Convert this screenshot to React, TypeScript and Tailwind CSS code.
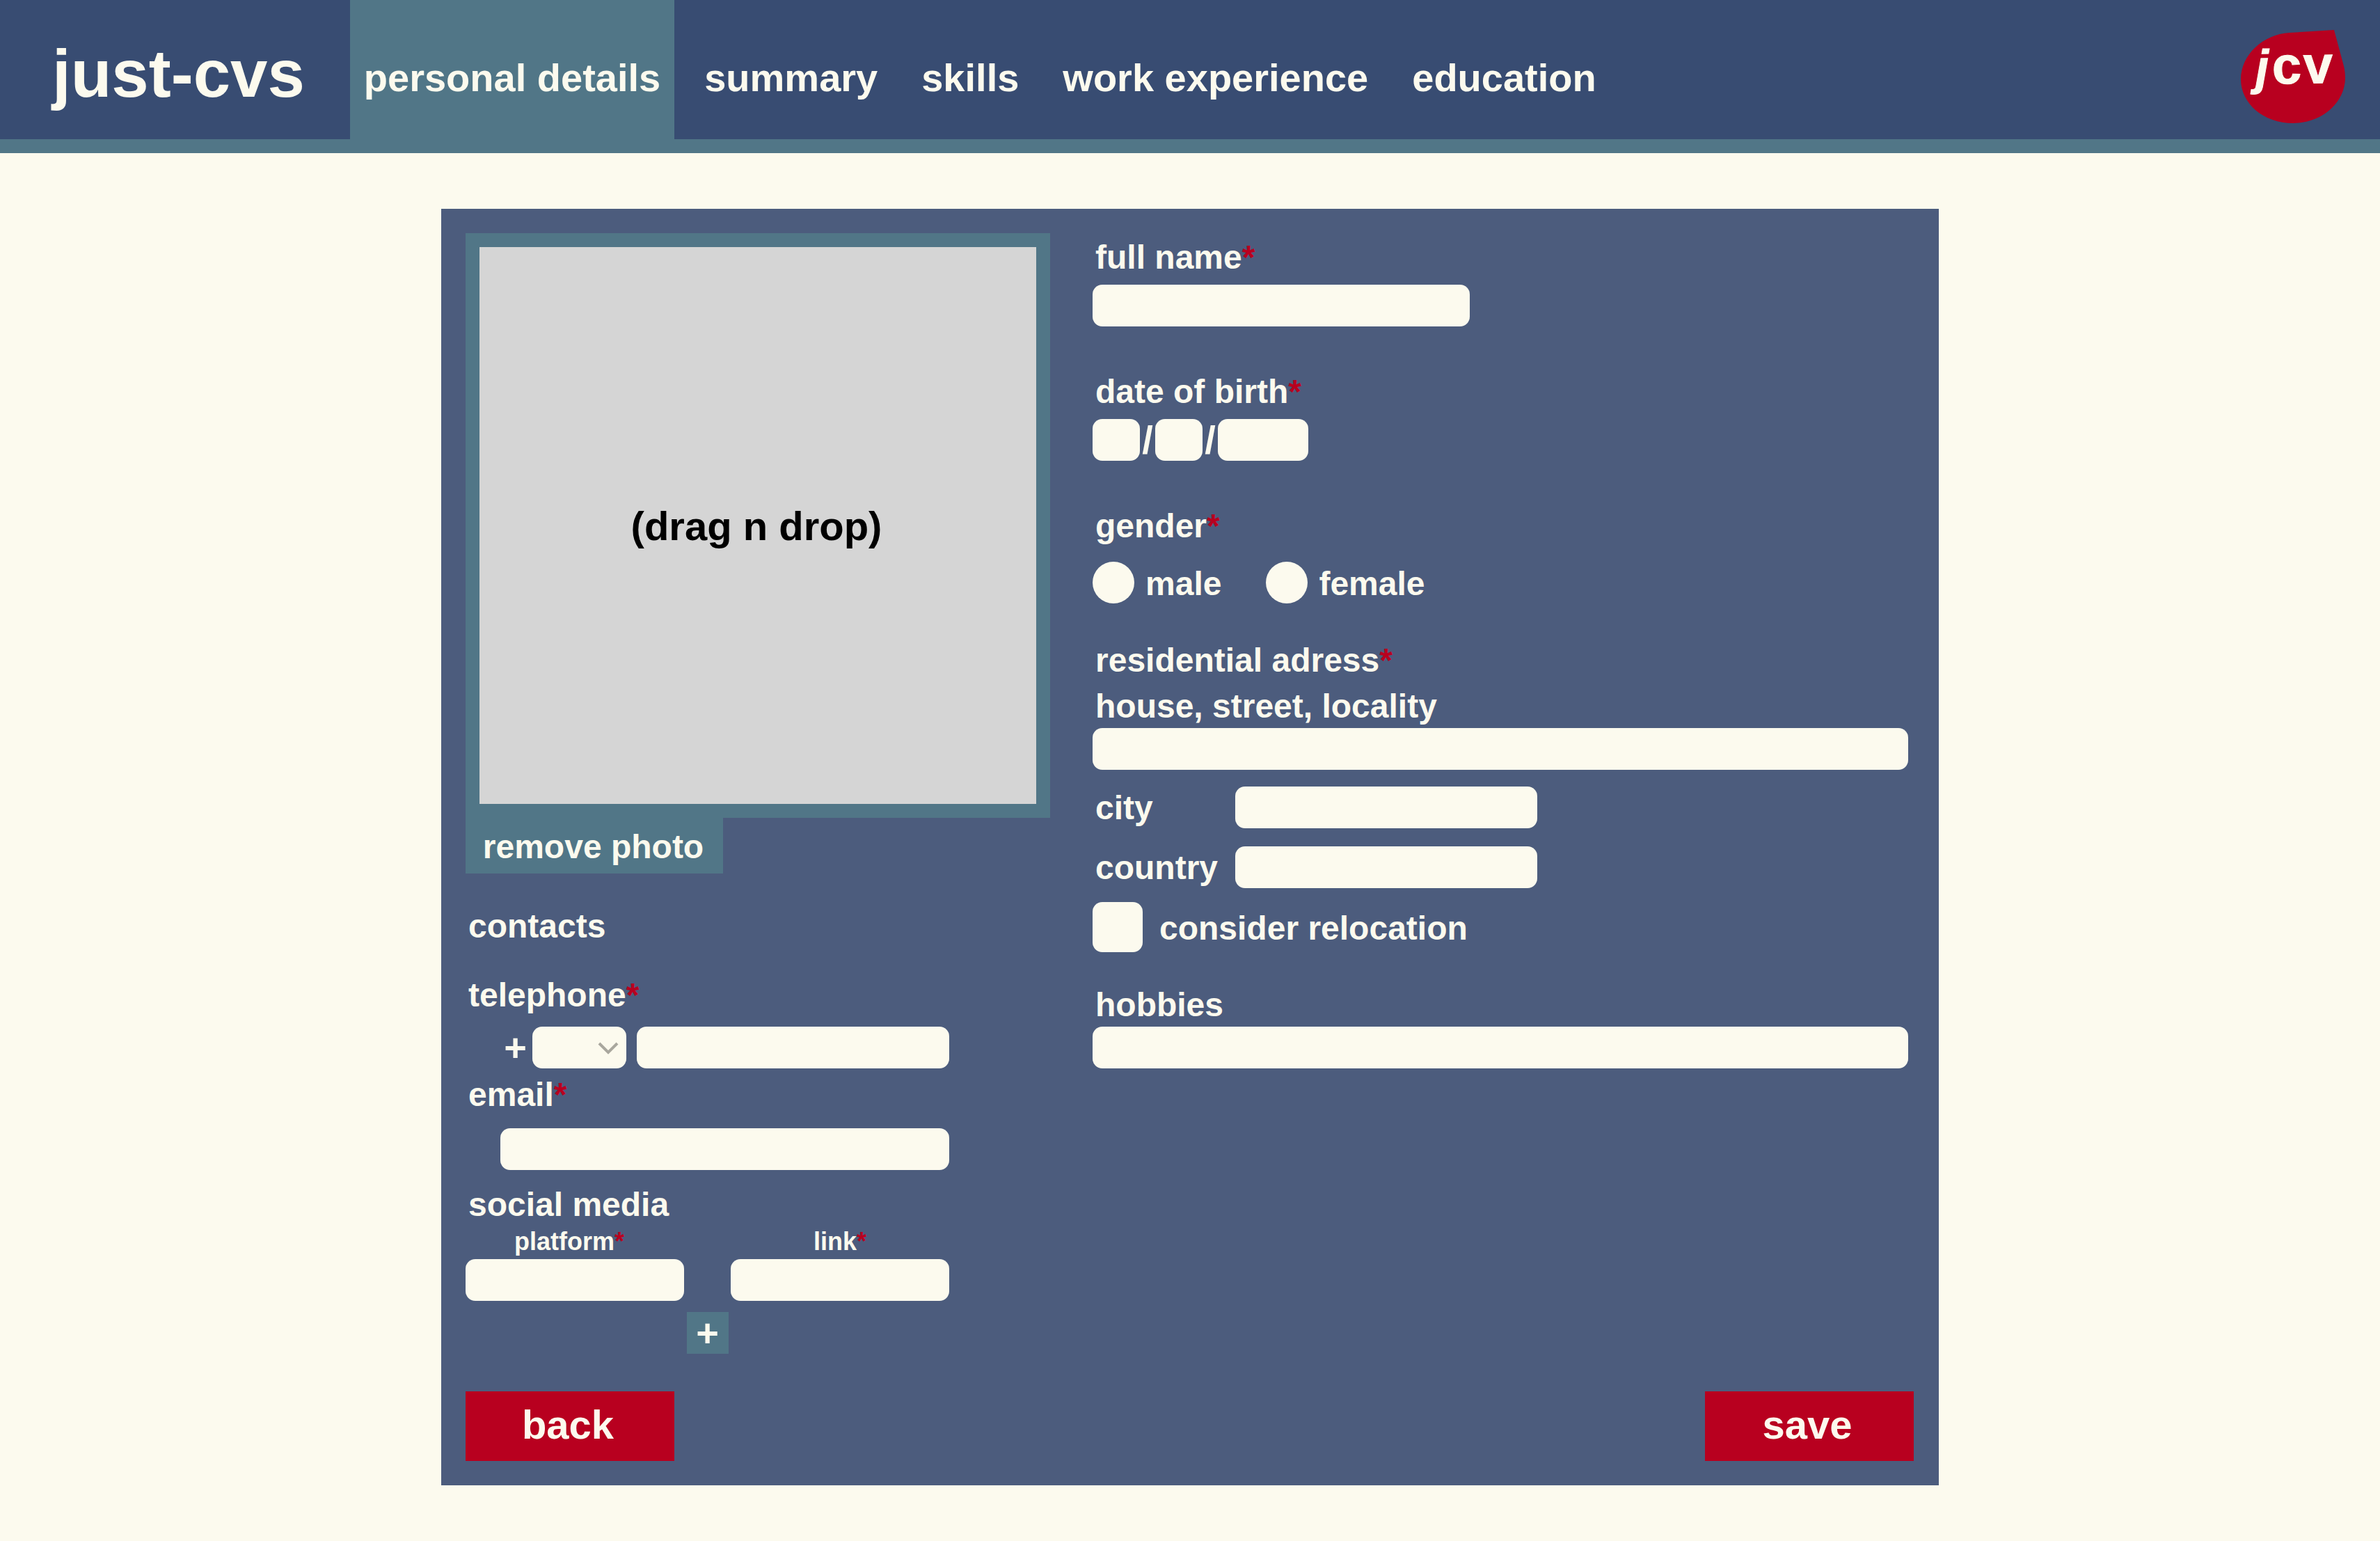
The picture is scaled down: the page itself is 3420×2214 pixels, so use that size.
import type { ReactNode } from "react";

const navItems = [
  { label: "personal details", href: "#personal-details", active: true },
  { label: "summary", href: "#summary", active: false },
  { label: "skills", href: "#skills", active: false },
  { label: "work experience", href: "#work-experience", active: false },
  { label: "education", href: "#education", active: false },
];

const field = "h-[60px] rounded-[14px] bg-[#fcfaee] px-4 text-[36px] text-[#384c72] outline-none";
const label = "block h-[60px] pt-px pl-1 text-[48px] leading-[60px]";

function Star() {
  return <span className="text-[#b8001f]">*</span>;
}

function Label({ id, required, children }: { id?: string; required?: boolean; children: ReactNode }) {
  return (
    <label htmlFor={id} className={label}>
      {children}
      {required && <Star />}
    </label>
  );
}

function Logo() {
  return (
    <svg width="150" height="134" viewBox="0 0 150 134" role="img" aria-label="jcv">
      <path
        d="M134 0 L148 52 C149.500 58 150 64 150 70 C149 106 115 134 75 134 C33 134 0 106 0 71 C0 36 32 6 70 4 Z"
        fill="#b8001f"
      />
      <g
        transform="rotate(-1 75 67)"
        fill="#fcfaee"
        stroke="#fcfaee"
        strokeWidth="1"
        fontFamily="'Liberation Sans', Arial, sans-serif"
        fontWeight="700"
        fontSize="76"
      >
        <text y="77">
          <tspan x="21" fontStyle="italic" fontSize="70">j</tspan>
          <tspan x="45">c</tspan>
          <tspan x="90">v</tspan>
        </text>
      </g>
    </svg>
  );
}

function Header() {
  return (
    <header className="flex items-stretch border-b-[20px] border-[#517687] bg-[#384c72] pr-[50px] pl-[75px]">
      <a href="#home" className="flex h-[200px] items-center pt-[12px] pr-[65px] text-[96px] leading-none">
        just-cvs
      </a>
      <nav className="flex flex-1 gap-[23px] text-[56px] leading-[64px]">
        {navItems.map((item) => (
          <a
            key={item.label}
            href={item.href}
            aria-current={item.active ? "page" : undefined}
            className={
              item.active
                ? "flex items-center bg-[#517687] px-5 pt-6 whitespace-nowrap"
                : "flex items-center px-5 pt-6 whitespace-nowrap"
            }
          >
            {item.label}
          </a>
        ))}
      </nav>
      <a href="#home" className="flex items-center pt-5">
        <Logo />
      </a>
    </header>
  );
}

function PhotoAndContacts() {
  return (
    <div className="w-[840px] shrink-0">
      <div className="flex aspect-square items-center justify-center border-[20px] border-[#517687] bg-[#d5d5d5] pt-[2px] pr-1 text-[58px] leading-[64px] text-black">
        (drag n drop)
      </div>
      <button type="button" className="h-20 w-[370px] bg-[#517687] pt-[3px] pr-[3px] text-[48px] leading-[60px]">
        remove photo
      </button>

      <div className="w-[695px]">
        <h2 className="mt-[46px] pl-1 text-[48px] leading-[60px]">contacts</h2>

        <div className="mt-[38px]">
          <Label id="phone" required>telephone</Label>
        </div>
        <div className="mt-4 flex items-center justify-end">
          <span className="mr-2 text-[56px] leading-[60px]">+</span>
          <div className="relative mr-[15px] w-[135px]">
            <select
              aria-label="country code"
              className="block h-[60px] w-full appearance-none rounded-[14px] bg-[#fcfaee] px-4 text-[36px] text-[#384c72] outline-none"
            >
              <option value=""></option>
            </select>
            <svg
              className="pointer-events-none absolute top-[21px] right-[11px]"
              width="30"
              height="20"
              viewBox="0 0 30 20"
              fill="none"
              stroke="#a9a79e"
              strokeWidth="4"
            >
              <path d="M2 3 L15 16 L28 3" />
            </svg>
          </div>
          <input id="phone" type="tel" className={`${field} w-[449px]`} />
        </div>

        <div className="mt-[7px]">
          <Label id="email" required>email</Label>
        </div>
        <div className="mt-[19px] pl-[50px]">
          <input id="email" type="email" className={`${field} block w-full`} />
        </div>

        <h3 className="mt-[20px] pl-1 text-[48px] leading-[60px]">social media</h3>
        <div className="mt-[3px] flex justify-between">
          <div className="w-[314px]">
            <label htmlFor="platform" className="block pr-4 text-center text-[36px] leading-10">
              platform<Star />
            </label>
            <input id="platform" type="text" className={`${field} mt-[5px] block w-full`} />
          </div>
          <div className="w-[314px]">
            <label htmlFor="link" className="block text-center text-[36px] leading-10">
              link<Star />
            </label>
            <input id="link" type="url" className={`${field} mt-[5px] block w-full`} />
          </div>
        </div>
        <div className="mt-4 flex justify-center">
          <button type="button" aria-label="add social media" className="h-[60px] w-[60px] bg-[#517687] text-[56px] leading-[52px]">
            +
          </button>
        </div>
      </div>
    </div>
  );
}

function Details() {
  return (
    <div className="min-w-0 flex-1 pt-1 pr-2">
      <Label id="name" required>full name</Label>
      <input id="name" type="text" className={`${field} mt-[10px] block w-[542px]`} />

      <div className="mt-[63px]">
        <Label id="day" required>date of birth</Label>
      </div>
      <div className="mt-[10px] flex items-center text-[56px] leading-[60px]">
        <input id="day" type="text" aria-label="day" className={`${field} w-[68px]`} />
        <span className="flex w-[22px] justify-center">/</span>
        <input type="text" aria-label="month" className={`${field} w-[68px]`} />
        <span className="flex w-[22px] justify-center">/</span>
        <input type="text" aria-label="year" className={`${field} w-[130px]`} />
      </div>

      <fieldset className="mt-[63px]">
        <legend className={label}>
          gender<Star />
        </legend>
        <div className="mt-[22px] flex gap-16 text-[48px] leading-[60px]">
          <label className="flex items-center gap-4">
            <input type="radio" name="gender" className="h-[60px] w-[60px] appearance-none rounded-full bg-[#fcfaee] checked:border-[16px] checked:border-[#517687]" />
            <span className="h-[60px] pt-[2px]">male</span>
          </label>
          <label className="flex items-center gap-4">
            <input type="radio" name="gender" className="h-[60px] w-[60px] appearance-none rounded-full bg-[#fcfaee] checked:border-[16px] checked:border-[#517687]" />
            <span className="h-[60px] pt-[2px]">female</span>
          </label>
        </div>
      </fieldset>

      <fieldset className="mt-[51px]">
        <legend className={label}>
          residential adress<Star />
        </legend>
        <div className="mt-[6px]">
          <Label id="street">house, street, locality</Label>
          <input id="street" type="text" className={`${field} mt-[2px] block w-full`} />
        </div>
        <div className="mt-6 flex items-center">
          <label htmlFor="city" className={`${label} w-[205px]`}>city</label>
          <input id="city" type="text" className={`${field} w-[434px]`} />
        </div>
        <div className="mt-[26px] flex items-center">
          <label htmlFor="country" className={`${label} w-[205px]`}>country</label>
          <input id="country" type="text" className={`${field} w-[434px]`} />
        </div>
        <label className="mt-5 flex items-center gap-6 text-[48px] leading-[60px]">
          <input type="checkbox" className="h-[72px] w-[72px] appearance-none rounded-[14px] bg-[#fcfaee] checked:border-[16px] checked:border-[#517687]" />
          <span className="h-[60px] pt-[2px]">consider relocation</span>
        </label>
      </fieldset>

      <div className="mt-[45px]">
        <Label id="hobbies">hobbies</Label>
        <input id="hobbies" type="text" className={`${field} mt-[2px] block w-full`} />
      </div>
    </div>
  );
}

export default function App() {
  return (
    <div className="min-h-screen bg-[#fcfaee] pb-20 font-['Liberation_Sans',Arial,sans-serif] font-bold text-[#fcfaee]">
      <Header />
      <main className="mx-auto mt-20 w-full max-w-[2152px] bg-[#4c5c7d] py-[35px] pr-9 pl-[35px]">
        <form>
          <div className="flex gap-[61px]">
            <PhotoAndContacts />
            <Details />
          </div>
          <div className="mt-[54px] flex justify-between text-[58px] leading-[64px]">
            <button type="button" className="h-[100px] w-[300px] bg-[#b8001f] pr-[6px] pb-1">back</button>
            <button type="submit" className="h-[100px] w-[300px] bg-[#b8001f] pr-[6px] pb-1">save</button>
          </div>
        </form>
      </main>
    </div>
  );
}
